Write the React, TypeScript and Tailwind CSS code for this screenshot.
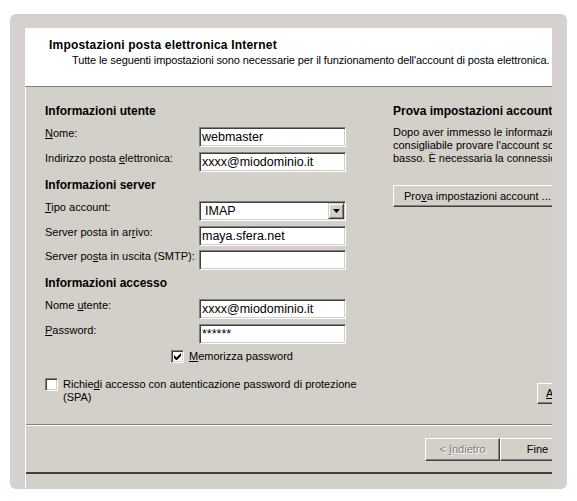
import React from "react";

const sans = "font-['Liberation_Sans',Arial,sans-serif]";

function U({ children }: { children: React.ReactNode }) {
  return <span className="underline underline-offset-[1px] decoration-1">{children}</span>;
}

function Field({ children }: { children?: React.ReactNode }) {
  return (
    <div className="box-border flex h-[20px] w-[147px] shrink-0 items-center overflow-hidden whitespace-nowrap border border-t-[#808080] border-l-[#808080] border-b-white border-r-white bg-white pl-[2px] pt-[1px] text-[12.5px] leading-none text-black shadow-[inset_1px_1px_0_#404040,inset_-1px_-1px_0_#d4d0c8]">
      {children}
    </div>
  );
}

function Select({ value }: { value: string }) {
  return (
    <div className="box-border flex h-[20px] w-[147px] shrink-0 items-center justify-between border border-t-[#808080] border-l-[#808080] border-b-white border-r-white bg-white pl-[5px] text-[12.5px] leading-none text-black shadow-[inset_1px_1px_0_#404040,inset_-1px_-1px_0_#d4d0c8]">
      <span className="pt-[1px]">{value}</span>
      <div className="mr-[1px] flex h-[16px] w-[16px] items-center justify-center border border-t-[#d4d0c8] border-l-[#d4d0c8] border-b-[#404040] border-r-[#404040] bg-[#d4d0c8] shadow-[inset_1px_1px_0_#ffffff,inset_-1px_-1px_0_#808080]">
        <svg width="7" height="4" viewBox="0 0 7 4">
          <path d="M0 0h7L3.5 4z" fill="#000" />
        </svg>
      </div>
    </div>
  );
}

function Check({ checked }: { checked?: boolean }) {
  return (
    <div className="box-border flex h-[13px] w-[13px] shrink-0 items-center justify-center border border-t-[#808080] border-l-[#808080] border-b-white border-r-white bg-white shadow-[inset_1px_1px_0_#404040,inset_-1px_-1px_0_#d4d0c8]">
      {checked && (
        <svg width="7" height="7" viewBox="0 0 7 7">
          <path d="M0 2v3l2 2h1l4-4V0L2.5 4.5z" fill="#000" />
        </svg>
      )}
    </div>
  );
}

function Row({ label, children, className = "" }: { label: React.ReactNode; children: React.ReactNode; className?: string }) {
  return (
    <div className={`flex items-start ${className}`}>
      <div className="w-[154px] whitespace-nowrap text-[11px] leading-[13px]">{label}</div>
      {children}
    </div>
  );
}

function Heading({ children, className = "" }: { children: React.ReactNode; className?: string }) {
  return <div className={`whitespace-nowrap text-[12px] font-bold leading-[14px] ${className}`}>{children}</div>;
}

function Btn({ children, className = "", disabled }: { children: React.ReactNode; className?: string; disabled?: boolean }) {
  return (
    <div
      className={`box-border flex shrink-0 items-center justify-center whitespace-nowrap border border-t-white border-l-white border-b-[#404040] border-r-[#404040] bg-[#d4d0c8] text-[11px] leading-none shadow-[inset_-1px_-1px_0_#808080] ${
        disabled ? "text-[#808080] [text-shadow:1px_1px_0_#ffffff]" : "text-black"
      } ${className}`}
    >
      {children}
    </div>
  );
}

export default function App() {
  return (
    <div className={`h-[501px] w-[577px] overflow-hidden bg-white pl-[10px] pt-[14px] text-black ${sans}`}>
      <div className="box-border h-[475px] w-[557px] rounded-[6px] bg-[#d6d0cf] pl-[15px] pt-[14px]">
        <div className="flex h-[460px] w-[527px] flex-col overflow-hidden">
          {/* Header */}
          <div className="box-border h-[59px] shrink-0 border-b border-b-[#808080] bg-white pl-[24px] pt-[10px]">
            <div className="whitespace-nowrap text-[12px] font-bold leading-[14px] tracking-[0.2px]">
              Impostazioni posta elettronica Internet
            </div>
            <div className="mt-[2px] whitespace-nowrap pl-[23px] text-[11px] leading-[13px] tracking-[-0.12px]">
              Tutte le seguenti impostazioni sono necessarie per il funzionamento dell'account di posta elettronica.
            </div>
          </div>

          {/* Body */}
          <div className="flex flex-1 flex-col border-l border-l-white bg-[#d3d0c9]">
            <div className="flex h-[337px] shrink-0 pl-[19px]">
              {/* Left column */}
              <div className="flex w-[348px] shrink-0 flex-col">
                <Heading className="mt-[17px]">Informazioni utente</Heading>
                <Row className="mt-[9px]" label={<><U>N</U>ome:</>}>
                  <Field>webmaster</Field>
                </Row>
                <Row className="mt-[5px]" label={<>Indirizzo posta <U>e</U>lettronica:</>}>
                  <Field>xxxx@miodominio.it</Field>
                </Row>
                <Heading className="mt-[6px]">Informazioni server</Heading>
                <Row className="mt-[9px]" label={<><U>T</U>ipo account:</>}>
                  <Select value="IMAP" />
                </Row>
                <Row className="mt-[5px]" label={<>Server posta in ar<U>r</U>ivo:</>}>
                  <Field>maya.sfera.net</Field>
                </Row>
                <Row className="mt-[4px]" label={<>Server po<U>s</U>ta in uscita (SMTP):</>}>
                  <Field />
                </Row>
                <Heading className="mt-[6px]">Informazioni accesso</Heading>
                <Row className="mt-[9px]" label={<>Nome <U>u</U>tente:</>}>
                  <Field>xxxx@miodominio.it</Field>
                </Row>
                <Row className="mt-[5px]" label={<><U>P</U>assword:</>}>
                  <Field>******</Field>
                </Row>
                <div className="mt-[6px] flex items-center pl-[126px]">
                  <Check checked />
                  <span className="ml-[5px] whitespace-nowrap text-[11px] leading-[13px]">
                    <U>M</U>emorizza password
                  </span>
                </div>
                <div className="mt-[15px] flex items-start">
                  <Check />
                  <span className="ml-[5px] whitespace-nowrap text-[11px] leading-[13px]">
                    Richie<U>d</U>i accesso con autenticazione password di protezione
                    <br />
                    (SPA)
                  </span>
                </div>
              </div>

              {/* Right column */}
              <div className="flex w-[220px] shrink-0 flex-col">
                <Heading className="mt-[17px]">Prova impostazioni account</Heading>
                <div className="mt-[8px] whitespace-nowrap text-[11px] leading-[13px]">
                  <div>Dopo aver immesso le informazioni in questa schermata, è</div>
                  <div>consigliabile provare l'account scegliendo il pulsante in</div>
                  <div>basso. È necessaria la connessione di rete.</div>
                </div>
                <Btn className="mt-[20px] h-[22px] w-[170px] !justify-start pl-[10px]">
                  Pro<U>v</U>a impostazioni account ...
                </Btn>
                <Btn className="ml-[144px] mt-[176px] h-[21px] w-[120px] !justify-start pl-[8px]">
                  <U>A</U>ltre impostazioni ...
                </Btn>
              </div>
            </div>

            {/* separator */}
            <div className="h-[2px] shrink-0 border-t border-t-[#808080] border-b border-b-white" />

            {/* Buttons */}
            <div className="flex h-[46px] shrink-0 pl-[399px] pt-[12px]">
              <Btn disabled className="h-[23px] w-[75px]">
                &lt;{"\u00a0"}<U>I</U>ndietro
              </Btn>
              <Btn className="h-[23px] w-[75px]">Fine</Btn>
            </div>

            <div className="h-[2px] shrink-0 bg-[#404040]" />
          </div>
        </div>
      </div>
    </div>
  );
}
